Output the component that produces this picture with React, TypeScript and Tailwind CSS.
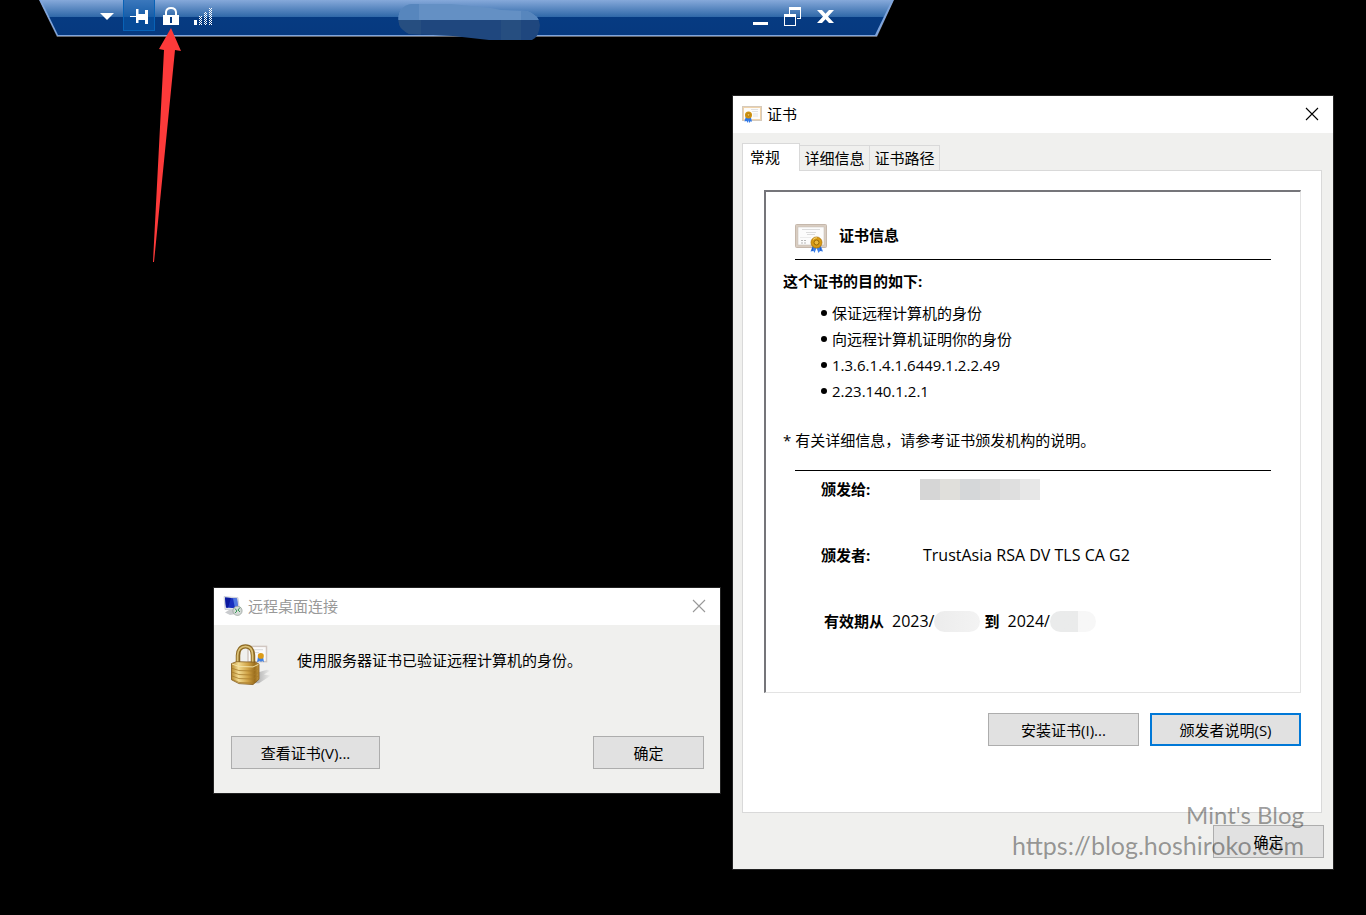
import clsx from 'clsx'
import { useState } from 'react'
import type { ReactNode } from 'react'

const PURPOSES = [
  '保证远程计算机的身份',
  '向远程计算机证明你的身份',
  '1.3.6.1.4.1.6449.1.2.2.49',
  '2.23.140.1.2.1'
]

const TABS = ['常规', '详细信息', '证书路径']

interface DialogButtonProps {
  children: ReactNode
  className?: string
  focused?: boolean
}

const DialogButton = ({ children, className, focused }: DialogButtonProps) => (
  <button
    type="button"
    className={clsx(
      'h-[33px] bg-[#e1e1e1] text-center',
      focused ? 'border-2 border-[#0078d7]' : 'border border-[#adadad]',
      className
    )}
  >
    {children}
  </button>
)

interface TitleBarProps {
  icon: ReactNode
  title: string
  inactive?: boolean
}

const TitleBar = ({ icon, title, inactive }: TitleBarProps) => (
  <div
    className={clsx(
      'flex h-[37px] items-center bg-white pr-[14px] pb-px pl-[9px]',
      inactive ? 'text-[#999999]' : 'text-black'
    )}
  >
    {icon}
    <h2 className="ml-[5px] flex-1">{title}</h2>
    <button type="button" aria-label="关闭">
      <svg width="14" height="14" viewBox="0 0 14 14" stroke="currentColor">
        <path d="M1 1L13 13M13 1L1 13" strokeWidth="1.1" />
      </svg>
    </button>
  </div>
)

const SmallCertificateIcon = () => (
  <svg width="20" height="18" viewBox="0 0 20 18">
    <rect x="0.5" y="1.5" width="19" height="14" fill="#fdfcfa" stroke="#d6cabb" />
    <rect x="1.5" y="2.5" width="17" height="12" fill="none" stroke="#f0d3aa" />
    <path d="M9 4.5h7M10 6.5h6M11 9h5M11 11h5" stroke="#e2e2e2" />
    <path d="M4 11l-1.500 5.500 2-.6L6 18l.6-3 .6 3 1.400-1.700 1.400.4L8.500 11z" fill="#2f78e8" />
    <circle cx="6.500" cy="10" r="3.500" fill="#cf920f" />
    <circle cx="6.500" cy="9.800" r="1.400" fill="#f1c04d" stroke="#9c6604" strokeWidth="0.600" />
  </svg>
)

const CertificateIcon = () => (
  <svg width="32" height="29" viewBox="0 0 32 29">
    <rect x="0.5" y="0.5" width="31" height="23" rx="1" fill="#d9cdc1" stroke="#c5b8ac" />
    <rect x="3" y="3" width="26" height="18" fill="#fcfcfc" stroke="#c3bab3" strokeWidth="0.500" />
    <path d="M7 5.500h18M11 8.500h10M12 10.500h8" stroke="#dcdcdc" />
    <path d="M5 13.500h11" stroke="#ececec" />
    <path d="M6 16.500h6M6 19h6" stroke="#b8b8b8" strokeDasharray="2 1" />
    <path d="M18 21l-2.500 6.500 3-.5L19.500 29l2-5 2 5 1.500-2 3 .5-2.500-6.500z" fill="#3c80ea" />
    <path d="M18 23l-1 4M25 23l1 4" stroke="#1b4fb8" strokeWidth="0.800" />
    <circle cx="21.500" cy="18.500" r="5.500" fill="#d79a13" stroke="#ae7406" strokeWidth="0.800" />
    <circle cx="21.500" cy="18.500" r="2.500" fill="#eab83c" stroke="#8f5f05" strokeWidth="0.900" />
    <path d="M18 15.500q2-2 4-1.700" stroke="#f6d87a" fill="none" />
  </svg>
)

const RemoteDesktopIcon = () => (
  <svg width="20" height="20" viewBox="0 0 20 20">
    <path d="M6 14l-4 2.500L7 19l6-1v-4z" fill="#c9cbce" />
    <path d="M1 .5l14 1.200 1.500 12L2 13.500z" fill="#dfe3ea" stroke="#aab1bf" strokeWidth="0.500" />
    <path d="M2 1.500l12 1 1 10L3 11.500z" fill="#1730bf" />
    <path d="M2 1.500l6 .5L5 11.700 3 11.500z" fill="#0a189e" />
    <path d="M10 2.200l4 .3 1 10-3-.3z" fill="#4f78e0" />
    <circle cx="14.500" cy="14.800" r="4.600" fill="#d5dbd7" stroke="#8f9894" strokeWidth="0.700" />
    <path d="M12 12.500l2 2.500-2 2M17 11.500l-2 2.500 2 2" fill="none" stroke="#3b9a58" />
  </svg>
)

const PadlockIcon = () => (
  <svg width="42" height="42" viewBox="0 0 42 44" preserveAspectRatio="none">
    <defs>
      <linearGradient id="brass">
        <stop offset="0" stopColor="#b88a2e" />
        <stop offset="0.250" stopColor="#f3dc92" />
        <stop offset="0.600" stopColor="#cfa144" />
        <stop offset="0.850" stopColor="#9a6d1c" />
        <stop offset="1" stopColor="#c79a3f" />
      </linearGradient>
      <linearGradient id="shade">
        <stop offset="0" stopColor="#8c8c8c" />
        <stop offset="1" stopColor="#efefee" />
      </linearGradient>
    </defs>
    <path d="M26 30l10-3 3 1-6 4 7 1-12 8h-4z" fill="url(#shade)" opacity="0.700" />
    <rect x="17" y="2.500" width="18.500" height="16" fill="#fafafa" stroke="#d1c7c1" strokeWidth="1.500" />
    <path d="M21 6h11M22 9h6" stroke="#d9d9d9" />
    <path d="M27 13l-1 6 3-1.500 1 1.500 1-1.500 2 1.500-1-6z" fill="#3d7fe2" />
    <circle cx="29.800" cy="12.500" r="3" fill="#dc9b16" />
    <path d="M7 22V12C7 6 10 2.500 14.500 2.500S22 6 22 12v10" fill="none" stroke="#8d6a24" strokeWidth="4.500" />
    <path d="M6.600 22V12c0-6 3.400-9.600 7.900-9.600S21.600 6 21.600 12v10" fill="none" stroke="#dcc278" strokeWidth="1.800" />
    <path d="M.5 20.500l5-2 19 .5 3.500 2V37l-6 5.500L8 41.500.5 37.500z" fill="url(#brass)" stroke="#80591a" strokeWidth="0.800" />
    <path d="M1 21l7 2.500 14 .5 5.500-2.700" fill="none" stroke="#f4e2a5" />
    <path
      d="M1 25.500l7 2.300 14 .5 5.500-2.300M1 29.500l7 2.500 14 .5 5.500-2.500M1 33.500l7 2.700 14 .5 5.500-3.200M1 37l7 3.300 14 .7"
      fill="none"
      stroke="#a87b2a"
      strokeWidth="0.800"
    />
  </svg>
)

const ConnectionBar = () => (
  <header className="absolute top-0 left-[39px] h-[37px] w-[855px]">
    <div className="h-full bg-[#66686e] [clip-path:polygon(0_0,100%_0,838px_100%,18px_100%)]">
      <div className="h-[36px] bg-[#7fa5dd] [clip-path:polygon(0_0,100%_0,838px_100%,18px_100%)]">
        <div className="h-[35px] bg-[linear-gradient(#86a9da_0px,#2f68a8_17px,#063b82_17px,#06397f_35px)] [clip-path:polygon(2px_0,853px_0,836px_100%,19px_100%)]">
          <div className="flex h-8 items-center justify-between pr-[60px] pl-[61px]">
            <div className="flex items-center text-white">
              <button type="button" aria-label="菜单">
                <svg width="14" height="7" viewBox="0 0 14 7">
                  <path d="M0 0h14L7 7z" fill="currentColor" />
                </svg>
              </button>
              <button
                type="button"
                aria-label="固定"
                className="mb-px ml-[9px] flex h-[31px] w-8 items-center justify-center border border-t-0 border-[#0862b6] bg-[#0857a8]/60 pt-[2px]"
              >
                <svg width="18" height="15" viewBox="0 0 18 15" fill="currentColor">
                  <path d="M0 7h6v1H0zM6 0h2.500v5H15V1h3v14h-3v-4H8.500v3H6z" />
                </svg>
              </button>
              <button type="button" aria-label="安全连接" className="ml-2">
                <svg width="16" height="18" viewBox="0 0 16 18">
                  <path d="M3 9V5Q3.500 1 8 1t5 4V9" fill="none" stroke="currentColor" strokeWidth="2" />
                  <path d="M0 8h16v10H0z" fill="currentColor" />
                  <path d="M7 10h2v6H7z" fill="#06397f" />
                </svg>
              </button>
              <button type="button" aria-label="连接质量" className="ml-[15px]">
                <svg width="19" height="18" viewBox="0 0 19 18">
                  <defs>
                    <pattern id="dither" width="2" height="2" patternUnits="userSpaceOnUse">
                      <path d="M0 0h1v1H0zM1 1h1v1H1z" fill="#fff" />
                    </pattern>
                  </defs>
                  <path d="M0 13h3v5H0z" fill="currentColor" />
                  <path d="M5 9h3v9H5zM10 5h3v13h-3zM15 1h3v17h-3z" fill="url(#dither)" />
                </svg>
              </button>
            </div>
            <div className="flex items-center gap-4 text-white">
              <button type="button" aria-label="最小化">
                <svg width="15" height="18" viewBox="0 0 15 18">
                  <path d="M0 15h15v3H0z" fill="currentColor" />
                </svg>
              </button>
              <button type="button" aria-label="还原">
                <svg width="17" height="20" viewBox="0 0 17 20" fill="currentColor">
                  <path d="M5 1h12v12h-4v-1h3V4H6v4H5zM0 8h12v12H0zM1 11v8h10v-8z" fillRule="evenodd" />
                </svg>
              </button>
              <button type="button" aria-label="关闭连接">
                <svg width="17" height="14" viewBox="0 0 17 14" fill="currentColor">
                  <path d="M0 1h5l3.500 3.800L12 1h5l-6 6.500 6 6.500h-5l-3.500-3.800L5 14H0l6-6.500z" />
                </svg>
              </button>
            </div>
          </div>
        </div>
      </div>
    </div>
    <svg className="absolute top-1 left-[358px]" width="144" height="36" viewBox="0 0 144 36">
      <clipPath id="smudge">
        <path d="M14 0H54l40 4 10 2 26 1q12 4 13 14-1 12-8 15H92l-36-4-20-1-24-1Q3 25 2 20-1 3 14 0z" />
      </clipPath>
      <g clipPath="url(#smudge)">
        <path d="M0 0h144v16H0z" fill="#6490c4" />
        <path d="M0 0h22v16H0zM124 0h20v16h-20z" fill="#5786bd" />
        <path d="M0 16h144v20H0z" fill="#1f477e" />
        <path d="M0 16h24v20H0zM104 16h20v20h-20z" fill="#264e80" />
      </g>
    </svg>
  </header>
)

const RemoteDesktopDialog = () => (
  <section className="absolute top-[588px] left-[214px] w-[506px] bg-[#f0f0ee] ring-1 ring-[#222222]">
    <TitleBar icon={<RemoteDesktopIcon />} title="远程桌面连接" inactive />
    <div className="flex items-start gap-6 pt-[19px] pl-[17px]">
      <PadlockIcon />
      <p className="pt-[5px]">使用服务器证书已验证远程计算机的身份。</p>
    </div>
    <div className="mt-[50px] flex justify-between pr-4 pb-6 pl-[17px]">
      <DialogButton className="w-[149px]">查看证书(V)...</DialogButton>
      <DialogButton className="w-[111px]">确定</DialogButton>
    </div>
  </section>
)

const CertificateDetails = () => (
  <div className="border border-t-2 border-l-2 border-[#e3e3e3] border-t-[#75757a] border-l-[#75757a] pt-8 pb-[60px] pl-[17px]">
    <div className="mr-[29px] ml-3 flex h-9 items-start gap-3 border-b border-black">
      <CertificateIcon />
      <h3 className="font-bold">证书信息</h3>
    </div>
    <h4 className="mt-[10px] font-bold">这个证书的目的如下:</h4>
    <ul className="mt-2 ml-[38px] leading-[26px]">
      {PURPOSES.map((purpose) => (
        <li key={purpose} className="flex items-center gap-[5px]">
          <span className="size-[6px] rounded-full bg-black" />
          {purpose}
        </li>
      ))}
    </ul>
    <p className="mt-[25px]">* 有关详细信息，请参考证书颁发机构的说明。</p>
    <hr className="mt-[19px] mr-[29px] ml-3 border-black" />
    <dl className="mt-[7px] ml-[38px] flex flex-col gap-11">
      <div className="flex items-center">
        <dt className="w-[99px] font-bold">颁发给:</dt>
        <dd className="flex h-[21px]">
          <span className="w-5 bg-[#d6d6d6]" />
          <span className="w-5 bg-[#e0dfdb]" />
          <span className="w-5 bg-[#d5d7d9]" />
          <span className="w-5 bg-[#dadada]" />
          <span className="w-5 bg-[#dfdfdf]" />
          <span className="w-5 bg-[#e7e7e7]" />
        </dd>
      </div>
      <div className="flex">
        <dt className="w-[102px] font-bold">颁发者:</dt>
        <dd className="text-[16px]">TrustAsia RSA DV TLS CA G2</dd>
      </div>
      <div className="ml-[3px] flex">
        <dt className="font-bold">有效期从</dt>
        <dd className="ml-2 flex items-center text-[16px]">
          2023/
          <span className="h-[21px] w-[46px] rounded-full bg-linear-to-r from-[#ececec] to-[#f3f3f3]" />
        </dd>
        <dt className="ml-1 font-bold">到</dt>
        <dd className="ml-2 flex items-center text-[16px]">
          2024/
          <span className="h-[21px] w-[46px] rounded-full bg-linear-to-r from-[#eaebeb] from-60% to-[#f7f7f7] to-60%" />
        </dd>
      </div>
    </dl>
  </div>
)

const CertificateDialog = () => {
  const [activeTab, setActiveTab] = useState(TABS[0])

  return (
    <section className="absolute top-24 right-[33px] w-[600px] bg-[#f0f0ee] ring-1 ring-[#222222]">
      <TitleBar icon={<SmallCertificateIcon />} title="证书" />
      <div className="px-[9px] pt-[10px] pb-[11px]">
        <div role="tablist" className="flex items-end">
          {TABS.map((tab) => (
            <button
              key={tab}
              type="button"
              role="tab"
              aria-selected={tab === activeTab}
              onClick={() => setActiveTab(tab)}
              className={clsx(
                'border border-[#d9d9d9]',
                tab === activeTab
                  ? 'relative z-10 -mb-px h-7 w-[58px] border-b-0 bg-white pr-3 pb-px'
                  : '-ml-px h-[25px] w-[71px] border-b-0'
              )}
            >
              {tab}
            </button>
          ))}
        </div>
        <div
          role="tabpanel"
          className="mr-[2px] border border-[#d9d9d9] bg-white px-[21px] pt-[19px] pb-[66px]"
        >
          <div className="mr-[-1px]">
            <CertificateDetails />
            <div className="mt-5 flex justify-end gap-[11px]">
              <DialogButton className="w-[151px]">安装证书(I)...</DialogButton>
              <DialogButton className="w-[151px]" focused>
                颁发者说明(S)
              </DialogButton>
            </div>
          </div>
        </div>
        <div className="mt-3 flex justify-end">
          <DialogButton className="w-[111px]">确定</DialogButton>
        </div>
      </div>
    </section>
  )
}

export default function App() {
  return (
    <main className="relative min-h-screen overflow-hidden bg-black font-['Open_Sans','Noto_Sans_CJK_SC',sans-serif] text-[15px] leading-[22px] text-black">
      <ConnectionBar />
      <svg
        className="absolute top-7 left-[152px]"
        width="30"
        height="234"
        viewBox="0 0 30 234"
      >
        <path d="M19 0l10 23-6-1L2 234H1l11-212-5-1z" fill="#fd3a3a" />
      </svg>
      <RemoteDesktopDialog />
      <CertificateDialog />
      <div className="pointer-events-none absolute top-[800px] right-[62px] text-right font-['Lato','Open_Sans',sans-serif] leading-[30px] text-black/40">
        <p className="text-[24px]">Mint's Blog</p>
        <p className="text-[25px]">https://blog.hoshiroko.com</p>
      </div>
    </main>
  )
}
